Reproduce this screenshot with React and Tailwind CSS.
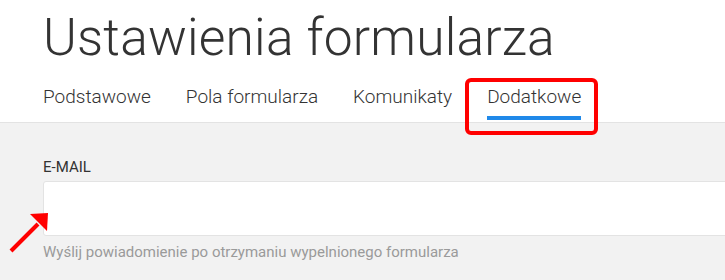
import React from "react";

export default function App() {
  const tabs = ["Podstawowe", "Pola formularza", "Komunikaty", "Dodatkowe"];
  return (
    <div className="w-[725px] h-[280px] overflow-hidden relative bg-[#f2f2f2]" style={{ fontFamily: "Roboto, 'Liberation Sans', sans-serif" }}>
      <div className="bg-white pl-[43px] border-b border-[#e3e3e3] h-[123px]">
        <h1 className="text-[51.5px] font-light text-[#333] leading-none pt-[12px] tracking-[0.2px]">Ustawienia formularza</h1>
        <div className="flex gap-[35px] mt-[21px]">
          {tabs.map((t, i) => (
            <div key={t} className="relative">
              <span className="text-[19px] font-light text-[#333] leading-[24px] block">{t}</span>
              {i === 3 && <div className="mt-[7px] h-[4px] bg-[#2089e9]" />}
            </div>
          ))}
        </div>
      </div>
      <div className="pl-[43px] pt-[35px]">
        <div className="text-[15px] text-[#333] leading-[18px]">E-MAIL</div>
        <div className="mt-[5px] h-[55px] bg-white border border-[#e3e3e3] rounded-[3px] w-[700px]" />
        <div className="mt-[8px] text-[15px] text-[#9a9a9a] leading-[17px]">Wyślij powiadomienie po otrzymaniu wypelnionego formularza</div>
      </div>
      <div className="absolute left-[465px] top-[78px] w-[133px] h-[57px] border-[4px] border-[#ff0000] rounded-[6px]" />
      <svg className="absolute left-0 top-[200px]" width="60" height="60" viewBox="0 200 60 60">
        <line x1="11" y1="251" x2="38" y2="224" stroke="#ff0000" strokeWidth="4" />
        <polygon points="48,213 30,214 47,231" fill="#ff0000" />
      </svg>
    </div>
  );
}
